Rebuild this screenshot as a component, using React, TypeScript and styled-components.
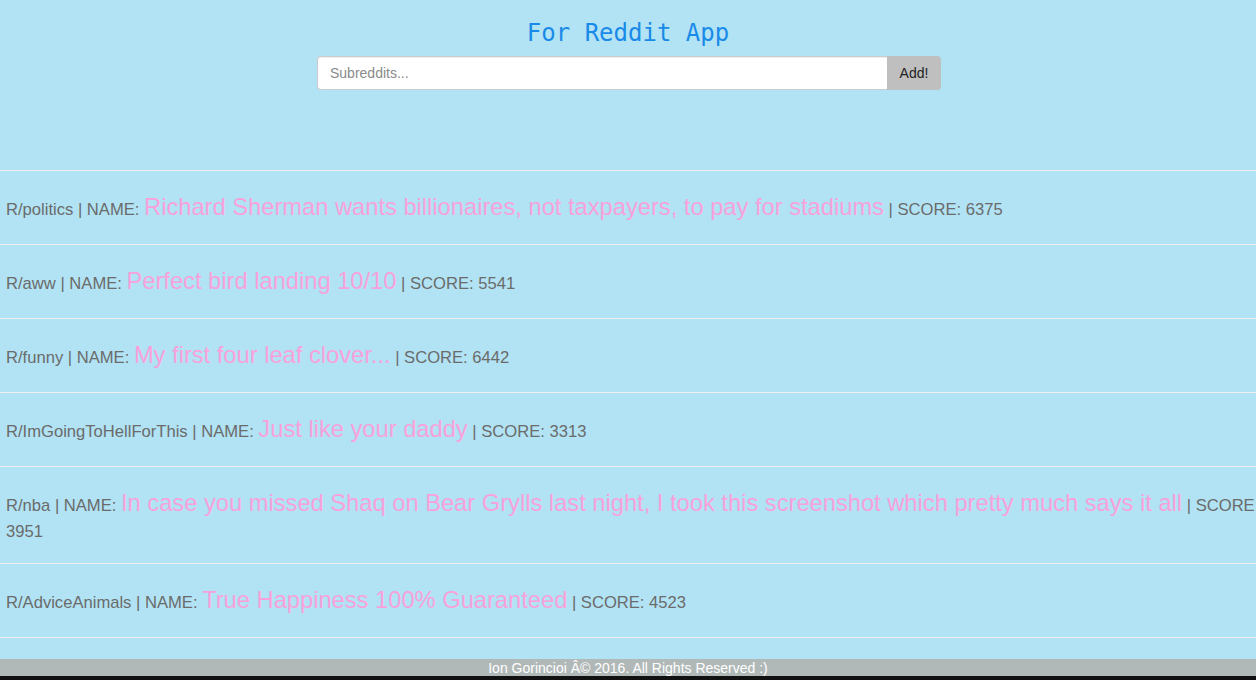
import React from "react";
import styled, { createGlobalStyle } from "styled-components";

const Global = createGlobalStyle`
  html, body { margin: 0; padding: 0; }
  body {
    background: #b1e3f4;
    font-family: "Liberation Sans", Arial, Helvetica, sans-serif;
    font-size: 16.6px;
    color: #6b6b6b;
  }
  * { box-sizing: border-box; }
`;

const Page = styled.div`
  height: 680px;
  display: flex;
  flex-direction: column;
  overflow: hidden;
`;

const Header = styled.header`
  display: flex;
  flex-direction: column;
  align-items: center;
  padding-top: 18px;
  height: 170px;
`;

const Title = styled.h1`
  margin: 0;
  font-family: "DejaVu Sans Mono", Menlo, monospace;
  font-weight: normal;
  font-size: 24px;
  line-height: 30px;
  color: #1a8ae8;
`;

const InputGroup = styled.div`
  display: flex;
  width: 624px;
  height: 34px;
  margin-top: 8px;
  margin-left: 2px;
`;

const Input = styled.input`
  flex: 1;
  height: 100%;
  border: 1px solid #ccc;
  border-right: none;
  border-radius: 4px 0 0 4px;
  padding: 6px 12px;
  font-family: "Liberation Sans", Arial, sans-serif;
  font-size: 14px;
  color: #555;
  background: #fff;
  box-shadow: inset 0 1px 1px rgba(0,0,0,0.075);
  &::placeholder { color: #8a8a8a; }
  outline: none;
`;

const AddButton = styled.button`
  width: 54px;
  height: 100%;
  border: none;
  border-radius: 0 4px 4px 0;
  background: #bfbfbf;
  font-family: "Liberation Sans", Arial, sans-serif;
  font-size: 14px;
  color: #222;
  padding: 0;
`;

const List = styled.main`
  flex: 1;
  overflow: hidden;
`;

const Divider = styled.hr`
  margin: 0;
  border: 0;
  border-top: 1px solid #eeeeee;
`;

const Row = styled.div`
  padding: 20px 0 20px 6px;
  margin-right: -14px;
  line-height: 23px;
`;

const PostName = styled.span`
  font-size: 23.7px;
  line-height: 33px;
  color: #f9a1da;
`;

const Footer = styled.footer`
  height: 17px;
  background: #b1b9b8;
  color: #ffffff;
  text-align: center;
  font-size: 14px;
  line-height: 19px;
  overflow: hidden;
`;

const BottomStrip = styled.div`
  height: 4px;
  background: #111;
`;

const posts = [
  { sub: "politics", name: "Richard Sherman wants billionaires, not taxpayers, to pay for stadiums", score: 6375 },
  { sub: "aww", name: "Perfect bird landing 10/10", score: 5541 },
  { sub: "funny", name: "My first four leaf clover...", score: 6442 },
  { sub: "ImGoingToHellForThis", name: "Just like your daddy", score: 3313 },
  { sub: "nba", name: "In case you missed Shaq on Bear Grylls last night, I took this screenshot which pretty much says it all", score: 3951 },
  { sub: "AdviceAnimals", name: "True Happiness 100% Guaranteed", score: 4523 },
];

export default function App() {
  return (
    <Page>
      <Global />
      <Header>
        <Title>For Reddit App</Title>
        <InputGroup>
          <Input placeholder="Subreddits..." />
          <AddButton>Add!</AddButton>
        </InputGroup>
      </Header>
      <List>
        {posts.map((p) => (
          <React.Fragment key={p.sub}>
            <Divider />
            <Row>
              R/{p.sub} | NAME: <PostName>{p.name}</PostName> | SCORE: {p.score}
            </Row>
          </React.Fragment>
        ))}
        <Divider />
      </List>
      <Footer>Ion Gorincioi Â© 2016. All Rights Reserved :)</Footer>
      <BottomStrip />
    </Page>
  );
}
